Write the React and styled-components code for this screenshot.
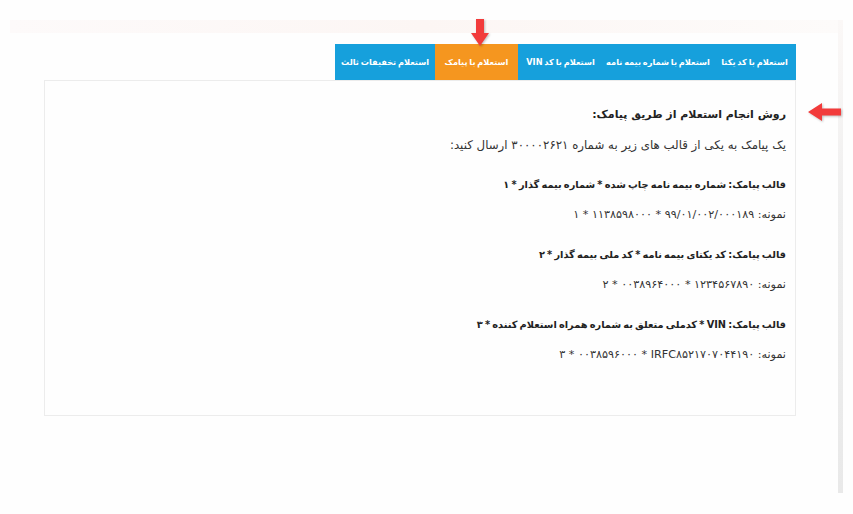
import React from 'react';
import styled, { createGlobalStyle } from 'styled-components';

const GlobalStyle = createGlobalStyle`
  html, body {
    margin: 0;
    padding: 0;
    background: #fefefe;
  }
  body {
    font-family: 'DejaVu Sans', 'Noto Sans', sans-serif;
    color: #222;
  }
`;

const Screen = styled.div`
  position: relative;
  width: 853px;
  height: 514px;
  padding: 20px 10px 0 10px;
  box-sizing: border-box;
  overflow: hidden;
`;

const Frame = styled.div`
  display: flex;
  height: 473px;
`;

const Main = styled.div`
  flex: 1;
  display: flex;
  flex-direction: column;
`;

const TopBand = styled.div`
  height: 13px;
  background: linear-gradient(to right, #fdfafa, #fcf6f4 50%, #fdfbfa);
`;

const SideStrip = styled.div`
  width: 5px;
  background: linear-gradient(to bottom, #fbf8f7, #efefef 40%, #e9e9e9);
`;

const Content = styled.div`
  padding: 11px 42px 0 34px;
  direction: rtl;
`;

const Tabs = styled.div`
  display: flex;
  height: 36px;
`;

const Tab = styled.div`
  width: ${(p) => p.$w}px;
  display: flex;
  align-items: center;
  justify-content: center;
  background: ${(p) => (p.$active ? '#f5961f' : '#16a0dc')};
  color: #fff;
  font-size: 8.2px;
  font-weight: bold;
  word-spacing: -1px;
  white-space: nowrap;
`;

const Card = styled.div`
  height: 336px;
  border: 1px solid #ececec;
  box-sizing: border-box;
  padding: 19px 9px 0 0;
  text-align: right;
`;

const Title = styled.div`
  font-size: 11px;
  font-weight: bold;
  height: 30px;
  line-height: 30px;
`;

const Lead = styled.div`
  font-size: 11.8px;
  height: 40px;
  line-height: 30px;
  color: #333;
`;

const Rule = styled.div`
  font-size: 9.8px;
  font-weight: bold;
  word-spacing: -1.2px;
  height: 30px;
  line-height: 30px;
`;

const Sample = styled.div`
  font-size: 11.2px;
  height: 40px;
  line-height: 30px;
  color: #333;
`;

const Arrow = styled.svg`
  position: absolute;
  filter: drop-shadow(1px 1px 1px rgba(0, 0, 0, 0.25));
`;

const RLM = '\u200F';

const tabs = [
  { label: 'استعلام با کد یکتا', w: 83 },
  { label: 'استعلام با شماره بیمه نامه', w: 110 },
  { label: 'استعلام با کد VIN', w: 85 },
  { label: 'استعلام با پیامک', w: 83, active: true },
  { label: 'استعلام تخفیفات ثالث', w: 100 },
];

const templates = [
  {
    rule: 'قالب پیامک: شماره بیمه نامه چاپ شده * شماره بیمه گذار * ۱',
    sample: 'نمونه: ۹۹/۰۱/۰۰۲/۰۰۰۱۸۹ * ۱۱۳۸۵۹۸۰۰۰ * ۱',
  },
  {
    rule: 'قالب پیامک: کد یکتای بیمه نامه * کد ملی بیمه گذار * ۲',
    sample: 'نمونه: ۱۲۳۴۵۶۷۸۹۰ * ۰۰۳۸۹۶۴۰۰۰ * ۲',
  },
  {
    rule: 'قالب پیامک: VIN * کدملی متعلق به شماره همراه استعلام کننده * ۳',
    sample: `نمونه: IRFC۸۵۲۱۷۰۷۰۴۴۱۹۰${RLM} * ۰۰۳۸۵۹۶۰۰۰ * ۳`,
  },
];

export default function App() {
  return (
    <>
      <GlobalStyle />
      <Screen>
        <Frame>
          <Main>
            <TopBand />
            <Content>
              <Tabs>
                {tabs.map((t) => (
                  <Tab key={t.label} $w={t.w} $active={t.active}>
                    {t.label}
                  </Tab>
                ))}
              </Tabs>
              <Card>
                <Title>روش انجام استعلام از طریق پیامک:</Title>
                <Lead>یک پیامک به یکی از قالب های زیر به شماره ۳۰۰۰۰۲۶۲۱ ارسال کنید:</Lead>
                {templates.map((t) => (
                  <React.Fragment key={t.rule}>
                    <Rule>{t.rule}</Rule>
                    <Sample>{t.sample}</Sample>
                  </React.Fragment>
                ))}
              </Card>
            </Content>
          </Main>
          <SideStrip />
        </Frame>
        <Arrow style={{ left: 470, top: 19 }} width="20" height="28" viewBox="0 0 20 28">
          <path d="M6 0 H14 V14 H19 L10 27 L1 14 H6 Z" fill="#f23b3b" />
        </Arrow>
        <Arrow style={{ left: 807, top: 102 }} width="34" height="20" viewBox="0 0 34 20">
          <path d="M34 6.5 V13.5 H15 V19 L1 10 L15 1 V6.5 Z" fill="#f23b3b" />
        </Arrow>
      </Screen>
    </>
  );
}
